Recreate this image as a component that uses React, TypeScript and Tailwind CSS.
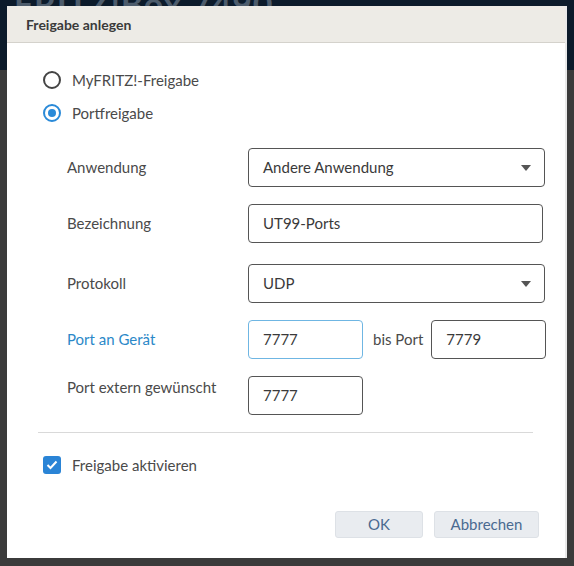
import React from 'react';

function Caret() {
  return (
    <svg width="10" height="6" viewBox="0 0 10 6" className="shrink-0">
      <path d="M0 0 L10 0 L5 6 Z" fill="#555" />
    </svg>
  );
}

function Radio({ checked, label }: { checked?: boolean; label: string }) {
  return (
    <div className="flex items-center h-6">
      {checked ? (
        <span className="w-[18px] h-[18px] rounded-full border-2 border-[#2a8ad8] flex items-center justify-center">
          <span className="w-[8px] h-[8px] rounded-full bg-[#2a8ad8]" />
        </span>
      ) : (
        <span className="w-[18px] h-[18px] rounded-full border-2 border-[#444]" />
      )}
      <span className="ml-[11px] text-[15px] text-[#4a4a4a]">{label}</span>
    </div>
  );
}

function Row({ label, children, className = '', blue = false }: { label: string; children: React.ReactNode; className?: string; blue?: boolean }) {
  return (
    <div className={`flex items-center ${className}`}>
      <div className={`w-[181px] text-[15px] ${blue ? 'text-[#2b88c8]' : 'text-[#4a4a4a]'}`}>{label}</div>
      {children}
    </div>
  );
}

export default function App() {
  return (
    <div className="relative w-[574px] h-[566px] bg-[#3b3b3b] overflow-hidden font-['Lato',sans-serif]">
      {/* dimmed page behind the dialog */}
      <div className="h-[70px] bg-[#0c1b2b] relative">
        <div className="absolute left-[14px] top-[-22px] text-[34px] text-[#4d5c6c] font-bold tracking-wide">FRITZ!Box 7490</div>
      </div>

      <div className="absolute left-[7px] top-[6px] w-[558px] h-[552px] bg-white flex flex-col shadow-[2px_0_0_#e9e9e9]">
        <div className="h-[37px] bg-[#edebe6] border-b border-[#d4d2cc] flex items-center pl-[19px]">
          <span className="text-[14px] font-bold text-[#3a3a3a]">Freigabe anlegen</span>
        </div>

        <div className="flex flex-col pt-[25px] pl-[36px]">
          <Radio label="MyFRITZ!-Freigabe" />
          <div className="mt-[9px]">
            <Radio checked label="Portfreigabe" />
          </div>
        </div>

        <div className="flex flex-col pl-[60px] mt-[23px]">
          <Row label="Anwendung">
            <div className="w-[297px] h-[39px] border border-[#555] rounded-[4px] flex items-center justify-between pl-[14px] pr-[13px] text-[15px] text-[#3a3a3a]">
              <span>Andere Anwendung</span>
              <Caret />
            </div>
          </Row>
          <Row label="Bezeichnung" className="mt-[17px]">
            <div className="w-[295px] h-[39px] border border-[#555] rounded-[4px] flex items-center pl-[14px] text-[15px] text-[#3a3a3a]">
              UT99-Ports
            </div>
          </Row>
          <Row label="Protokoll" className="mt-[21px]">
            <div className="w-[297px] h-[39px] border border-[#555] rounded-[4px] flex items-center justify-between pl-[14px] pr-[13px] text-[15px] text-[#3a3a3a]">
              <span>UDP</span>
              <Caret />
            </div>
          </Row>
          <Row label="Port an Gerät" blue className="mt-[17px]">
            <div className="w-[115px] h-[39px] border border-[#6fb6e3] rounded-[4px] flex items-center pl-[14px] text-[15px] text-[#3a3a3a]">
              7777
            </div>
            <span className="ml-[10px] text-[15px] text-[#4a4a4a]">bis Port</span>
            <div className="ml-[8px] w-[115px] h-[39px] border border-[#555] rounded-[4px] flex items-center pl-[14px] text-[15px] text-[#3a3a3a]">
              7779
            </div>
          </Row>
          <div className="flex mt-[17px]">
            <div className="w-[181px] text-[15px] text-[#4a4a4a]">Port extern gewünscht</div>
            <div className="w-[115px] h-[39px] border border-[#555] rounded-[4px] flex items-center pl-[14px] text-[15px] text-[#3a3a3a]">
              7777
            </div>
          </div>
        </div>

        <div className="mx-[31px] mt-[17px] border-t border-[#d9d9d9] w-[495px]" />

        <div className="flex items-center pl-[36px] mt-[21px]">
          <span className="w-[18px] h-[18px] rounded-[3px] bg-[#2a84d6] flex items-center justify-center">
            <svg width="12" height="10" viewBox="0 0 12 10">
              <path d="M1.5 5 L4.5 8 L10.5 1.5" stroke="white" strokeWidth="2" fill="none" />
            </svg>
          </span>
          <span className="ml-[11px] text-[15px] text-[#4a4a4a]">Freigabe aktivieren</span>
        </div>

        <div className="flex justify-end gap-[11px] pr-[26px] mt-[34px]">
          <button className="w-[88px] h-[27px] bg-[#e9ecf0] border border-[#dde1e6] rounded-[3px] text-[15px] text-[#4a6a90]">OK</button>
          <button className="w-[105px] h-[27px] bg-[#e9ecf0] border border-[#dde1e6] rounded-[3px] text-[15px] text-[#4a6a90]">Abbrechen</button>
        </div>
      </div>
    </div>
  );
}
